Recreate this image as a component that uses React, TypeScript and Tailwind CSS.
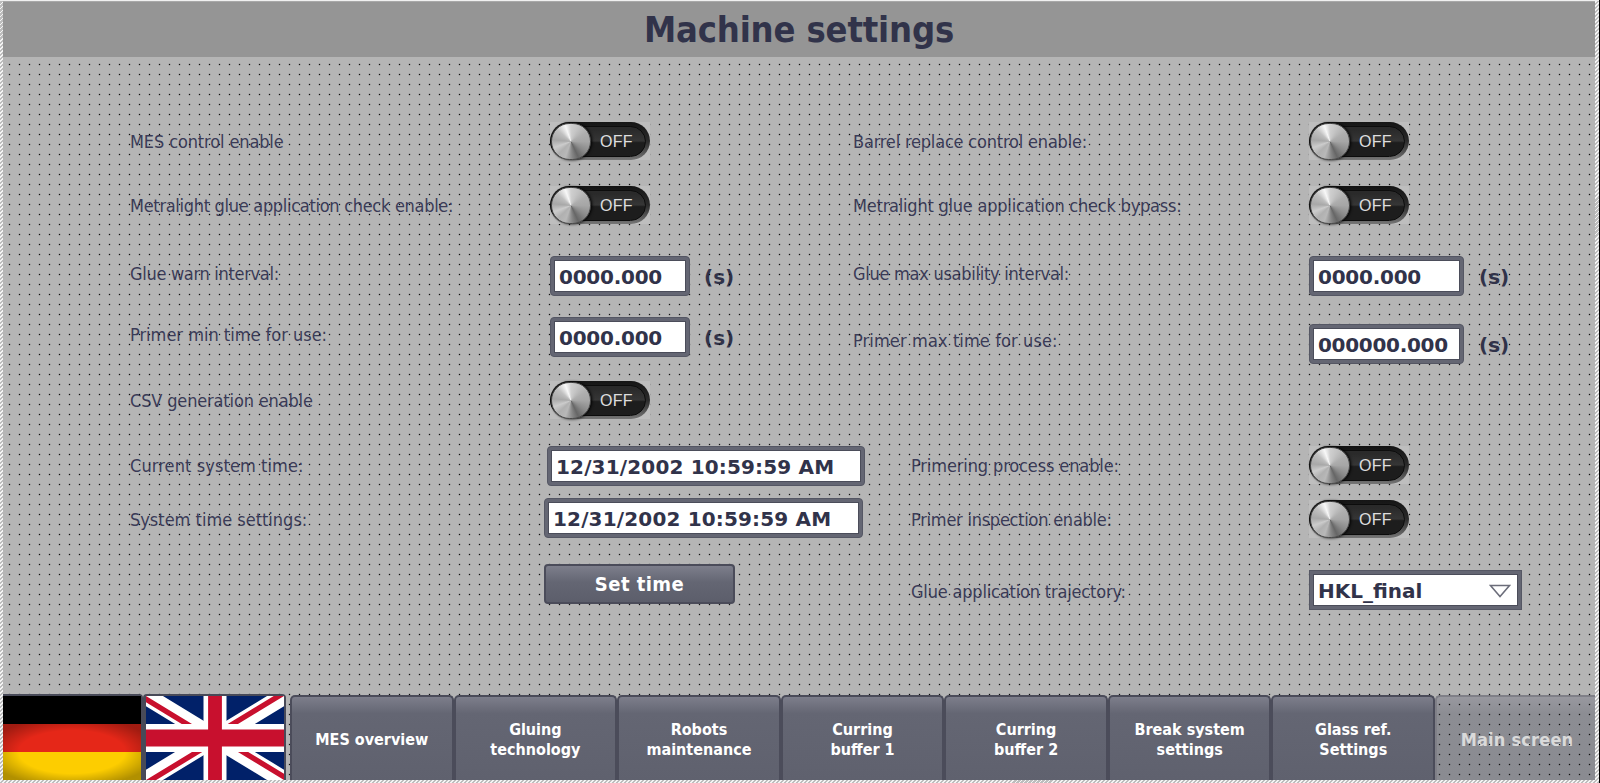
import type { ReactNode } from "react";

const LABEL =
  "whitespace-nowrap font-['DejaVu_Sans_Condensed','DejaVu_Sans',sans-serif] text-[18px] leading-6 text-[#3b3c58]";

function Label({ className, children }: { className: string; children: ReactNode }) {
  return <div className={`${LABEL} ${className}`}>{children}</div>;
}

function Toggle({ className = "" }: { className?: string }) {
  return (
    <button
      className={`z-10 flex h-[38px] w-[100px] items-start bg-[#bebebe] ${className}`}
    >
      <span className="flex h-[38px] w-[100px] items-center rounded-full bg-linear-to-b from-[#151515] via-[#2b2b2b] to-[#777] pt-[4px] pr-[4px] pb-[3px]">
        <span className="flex h-[31px] w-full items-center rounded-full border border-[#0c0c0c] bg-linear-to-b from-[#2a2a2a] from-10% via-[#363636] via-48% to-[#1d1d1d] to-54%">
          <span className="h-[37px] w-[40px] shrink-0 rounded-full border border-[#4a4a4a] bg-[conic-gradient(from_0deg,#cfcfcf_0deg,#c4c4c4_25deg,#aeaeae_60deg,#a6a6a6_90deg,#8a8a8a_125deg,#666666_155deg,#868686_175deg,#b8b8b8_200deg,#b0b0b0_225deg,#cccccc_250deg,#a8a8a8_275deg,#c0c0c0_310deg,#f8f8f8_340deg,#cfcfcf_360deg)] shadow-[1px_0px_3px_#000]" />
          <span className="mt-px ml-[9px] font-['Liberation_Sans',sans-serif] text-[16px] leading-none tracking-[0.3px] text-[#dedede]">
            OFF
          </span>
        </span>
      </span>
    </button>
  );
}

function Field({ className, children }: { className: string; children: ReactNode }) {
  return (
    <div
      className={`z-10 flex h-10 shrink-0 items-center rounded-[4px] border border-[#555764] bg-[#646673] p-[3px] ${className}`}
    >
      <div className="flex h-full w-full items-center border border-[#4b4d5a] bg-white pt-[2px] pl-[4px] font-['DejaVu_Sans',sans-serif] text-[20px] leading-none font-bold whitespace-nowrap text-[#31334a]">
        {children}
      </div>
    </div>
  );
}

function Unit() {
  return (
    <span className="pt-px font-['DejaVu_Sans',sans-serif] text-[20px] leading-none font-bold text-[#31334a]">
      (s)
    </span>
  );
}

const NAV: string[][] = [
  ["MES overview"],
  ["Gluing", "technology"],
  ["Robots", "maintenance"],
  ["Curring", "buffer 1"],
  ["Curring", "buffer 2"],
  ["Break system", "settings"],
  ["Glass ref.", "Settings"],
];

function GermanFlag() {
  return (
    <div className="z-10 h-[86px] w-[140px] rounded-tr-[4px] border-t-2 border-r-2 border-[#484a58]">
      <svg width="138" height="84" viewBox="0 0 138 84">
        <defs>
          <radialGradient id="shade" cx="50%" cy="50%" r="62%">
            <stop offset="62%" stopColor="#000" stopOpacity="0" />
            <stop offset="100%" stopColor="#000" stopOpacity="0.3" />
          </radialGradient>
        </defs>
        <rect width="138" height="28" fill="#000" />
        <rect y="28" width="138" height="28" fill="#e52718" />
        <rect y="56" width="138" height="28" fill="#fdcd00" />
        <rect y="28" width="138" height="56" fill="url(#shade)" />
      </svg>
    </div>
  );
}

function BritishFlag() {
  return (
    <div className="z-10 h-[86px] w-[143px] rounded-t-[4px] border-t-2 border-r-2 border-l-3 border-[#484a58]">
      <svg width="138" height="84" viewBox="0 0 60 30" preserveAspectRatio="none">
        <clipPath id="quarters">
          <path d="M30 15h30v15zv15H0zH0V0zV0h30z" />
        </clipPath>
        <rect width="60" height="30" fill="#012169" />
        <path d="M0 0L60 30M60 0L0 30" stroke="#fff" strokeWidth="6.6" />
        <path d="M0 0L60 30M60 0L0 30" clipPath="url(#quarters)" stroke="#c8102e" strokeWidth="4" />
        <path d="M30 0V30M0 15H60" stroke="#fff" strokeWidth="10" />
        <path d="M30 0V30M0 15H60" stroke="#c8102e" strokeWidth="6" />
      </svg>
    </div>
  );
}

export default function App() {
  return (
    <div className="flex h-[783px] w-[1600px] flex-col overflow-hidden border-r border-black bg-[repeating-linear-gradient(135deg,#f4f4f4_0px,#f4f4f4_1.4px,#bdbdbd_1.4px,#bdbdbd_2.83px)] pr-1 pb-[3px] pl-[3px]">
      <div className="-mr-1 -ml-[3px] h-px shrink-0 bg-[#f0f0f0]" />
      <header className="flex h-[56px] shrink-0 items-center justify-center border-t border-[#a8a8a8] bg-[#959595]">
        <h1 className="font-['DejaVu_Sans_Condensed','DejaVu_Sans',sans-serif] text-[36px] leading-none font-bold tracking-[-0.15px] whitespace-nowrap text-[#31334a]">
          Machine settings
        </h1>
      </header>
      <div className="relative flex h-[723px] flex-col bg-[#b5b5b5]">
        <div className="pointer-events-none absolute inset-0 z-[5] bg-[#101010] [mask-image:linear-gradient(90deg,transparent_5px,#0002_5px,#0002_6px,#000_6px,#000_7px,#0002_7px,#0002_8px,transparent_8px),linear-gradient(transparent_6px,#0002_6px,#0002_7px,#000_7px,#000_8px,#0002_8px,#0002_9px,transparent_9px)] [mask-size:10px_10px] [mask-composite:intersect]" />

        <main className="grid h-[637px] grid-cols-[414px_309px_456px_1fr] grid-rows-[64px_70px_61px_64px_65px_52px_66px_60px] pt-[65px] pl-[127px]">
          <Label className="mt-2 tracking-[-0.12px]">MES control enable</Label>
          <Toggle className="ml-[6px]" />
          <Label className="mt-2 tracking-[-0.19px]">Barrel replace control enable:</Label>
          <Toggle />

          <Label className="mt-2 tracking-[-0.3px]">Metralight glue application check enable:</Label>
          <Toggle className="ml-[6px]" />
          <Label className="mt-2 tracking-[-0.22px]">Metralight glue application check bypass:</Label>
          <Toggle />

          <Label className="mt-[6px] tracking-[-0.3px]">Glue warn interval:</Label>
          <div className="ml-[6px] flex h-10 items-center gap-[14px]">
            <Field className="w-[140px] tracking-[-0.25px]">0000.000</Field>
            <Unit />
          </div>
          <Label className="mt-[6px] tracking-[-0.27px]">Glue max usability interval:</Label>
          <div className="flex h-10 items-center gap-[15px]">
            <Field className="w-[155px] tracking-[-0.25px]">0000.000</Field>
            <Unit />
          </div>

          <Label className="mt-[6px]">Primer min time for use:</Label>
          <div className="ml-[6px] flex h-10 items-center gap-[14px]">
            <Field className="w-[140px] tracking-[-0.25px]">0000.000</Field>
            <Unit />
          </div>
          <Label className="mt-3 tracking-[0.12px]">Primer max time for use:</Label>
          <div className="mt-[7px] flex h-10 items-center gap-[15px]">
            <Field className="w-[155px] tracking-[-0.3px]">000000.000</Field>
            <Unit />
          </div>

          <Label className="mt-2 tracking-[-0.15px]">CSV generation enable</Label>
          <Toggle className="ml-[6px]" />
          <span />
          <span />

          <Label className="mt-2 tracking-[0.1px]">Current system time:</Label>
          <Field className="ml-[3px] w-[318px] tracking-[0.16px]">12/31/2002 10:59:59 AM</Field>
          <Label className="mt-2 ml-[58px] tracking-[-0.12px]">Primering process enable:</Label>
          <Toggle />

          <Label className="mt-[10px]">System time settings:</Label>
          <Field className="w-[319px] tracking-[0.16px]">12/31/2002 10:59:59 AM</Field>
          <Label className="mt-[10px] ml-[58px] tracking-[-0.25px]">Primer inspection enable:</Label>
          <Toggle className="mt-[2px]" />

          <span />
          <button className="z-10 h-10 w-[191px] rounded-[4px] border-2 border-[#4b4c5a] bg-linear-to-b from-[#7d7e8b] via-[#646673] via-45% to-[#5c5e6b] pb-px font-['DejaVu_Sans_Condensed','DejaVu_Sans',sans-serif] text-[20px] leading-none font-bold tracking-[0.45px] text-white">
            Set time
          </button>
          <Label className="mt-4 ml-[58px] tracking-[-0.18px]">Glue application trajectory:</Label>
          <div className="z-10 mt-[6px] flex h-10 w-[213px] border border-[#555764] bg-[#646673] p-[3px]">
            <div className="flex w-full items-center justify-between border border-[#4b4d5a] bg-white pt-px pr-[6px] pl-[4px] font-['DejaVu_Sans',sans-serif] text-[20px] leading-none font-bold text-[#31334a]">
              HKL_final
              <svg width="22" height="14" viewBox="0 0 22 14" fill="none">
                <path d="M1.5 1.5H20.5L11 12.5Z" stroke="#6b6d7a" strokeWidth="1.5" />
              </svg>
            </div>
          </div>
        </main>

        <nav className="flex h-[86px] shrink-0">
          <GermanFlag />
          <BritishFlag />
          <div className="mt-px ml-[4px] flex h-[85px] w-[1145px] shrink-0">
            {NAV.map((lines) => (
              <button
                key={lines.join(" ")}
                className="z-10 flex flex-1 flex-col items-center justify-center rounded-t-[5px] border-x-2 border-t-2 border-[#4b4c5a] bg-linear-to-b from-[#7d7e8b] via-[#646673] via-20% to-[#5f616e] pt-[2px] font-['DejaVu_Sans_Condensed','DejaVu_Sans',sans-serif] text-[16px] leading-5 font-bold text-white"
              >
                {lines.map((line) => (
                  <span key={line}>{line}</span>
                ))}
              </button>
            ))}
          </div>
          <button className="mt-px flex h-[85px] flex-1 items-center justify-center rounded-tl-[5px] border-t-2 border-l-2 border-[#808088] bg-linear-to-b from-[#98989f] via-[#8c8d93] via-20% to-[#8a8b91] pt-[3px] pl-[2px] font-['DejaVu_Sans_Condensed','DejaVu_Sans',sans-serif] text-[18px] leading-5 font-bold tracking-[0.2px] text-[#dadada]">
            Main screen
          </button>
        </nav>
      </div>
    </div>
  );
}
